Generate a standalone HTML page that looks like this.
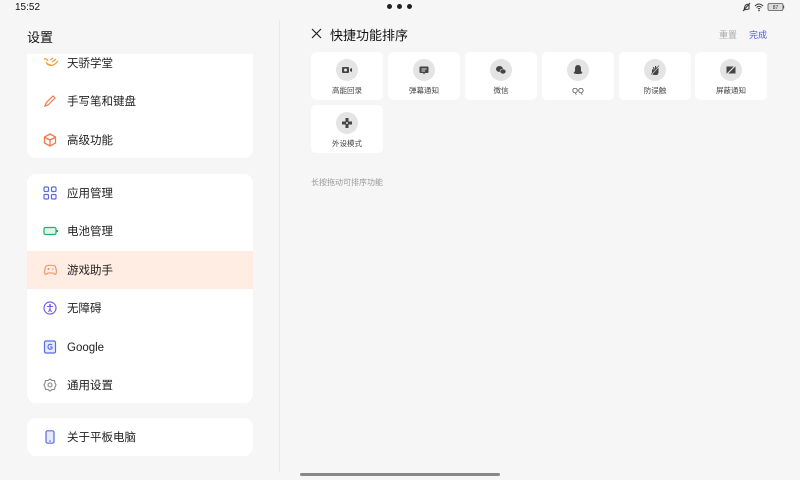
<!DOCTYPE html>
<html><head><meta charset="utf-8"><style>
*{margin:0;padding:0;box-sizing:border-box}
body{width:800px;height:480px;background:#f6f6f6;font-family:"Liberation Sans","Noto Sans CJK SC",sans-serif;position:relative;overflow:hidden;color:#222}
.abs{position:absolute}
.card{position:absolute;left:27px;width:226px;background:#fff;border-radius:9px;overflow:hidden}
.row{position:absolute;left:0;width:226px;height:38px;font-size:11.5px;color:#222}
.row span{position:absolute;left:40px;top:13px;line-height:14px}
.row svg{position:absolute;left:16px;top:12px}
.tile{position:absolute;width:72px;height:48px;background:#fff;border-radius:5px}
.tile .c{position:absolute;left:25px;top:7px;width:22px;height:22px;border-radius:50%;background:#e4e4e4}
.tile .c svg{position:absolute;left:5px;top:5px}
.tile .l{position:absolute;left:0;right:0;top:34px;text-align:center;font-size:7.5px;color:#444;line-height:9px}
</style></head><body>
<div class="abs" style="left:15px;top:2px;font-size:10px;color:#111">15:52</div>
<div class="abs" style="left:387px;top:4px;width:5px;height:5px;border-radius:50%;background:#222"></div>
<div class="abs" style="left:397px;top:4px;width:5px;height:5px;border-radius:50%;background:#222"></div>
<div class="abs" style="left:407px;top:4px;width:5px;height:5px;border-radius:50%;background:#222"></div>
<svg class="abs" style="left:742px;top:2px" width="50" height="10" viewBox="0 0 50 10">
<path d="M2 8 L3 4 Q5 1 7 3 L7 7 Z M1 9 L8 1" stroke="#333" fill="none" stroke-width="1"/>
<path d="M13 4 Q17 0 21 4 M14.5 5.5 Q17 3 19.5 5.5 M16 7 Q17 6 18 7" stroke="#333" fill="none" stroke-width="1"/><circle cx="17" cy="8.5" r="0.8" fill="#333"/>
<rect x="26" y="1.5" width="15" height="7" rx="1.5" fill="#ddd" stroke="#555" stroke-width="0.8"/><rect x="41" y="3.5" width="1.2" height="3" fill="#555"/>
<text x="33.5" y="7" font-size="5" text-anchor="middle" fill="#333" font-family="Liberation Sans">87</text></svg>

<div class="abs" style="left:27px;top:27px;font-size:13px;color:#111">设置</div>

<div class="card" style="top:54px;height:104px;border-radius:0 0 9px 9px">
 <div class="row" style="top:-10px"><svg width="16" height="14" viewBox="0 0 16 14"><path d="M1 3 Q4 2 5 5 M4 8 Q8 11 12 8 L15 5 M7 4 L10 2 M9 6 L13 3 M3 6 Q5 9 8 9" stroke="#f39a3a" fill="none" stroke-width="1.2"/></svg><span>天骄学堂</span></div>
 <div class="row" style="top:28px"><svg width="14" height="14" viewBox="0 0 14 14"><path d="M2 12 L3 9 L10 2 L12 4 L5 11 Z" stroke="#f0784a" fill="none" stroke-width="1.2"/></svg><span>手写笔和键盘</span></div>
 <div class="row" style="top:67px"><svg width="14" height="14" viewBox="0 0 14 14"><path d="M7 1 L12.5 4 L12.5 10 L7 13 L1.5 10 L1.5 4 Z M7 7 L12 4.5 M7 7 L2 4.5 M7 7 L7 12.5" stroke="#f0784a" fill="none" stroke-width="1.3"/></svg><span>高级功能</span></div>
</div>

<div class="card" style="top:174px;height:229px">
 <div class="row" style="top:0"><svg width="14" height="14" viewBox="0 0 14 14"><g stroke="#5a6be0" fill="none" stroke-width="1.2"><rect x="1" y="1" width="4.5" height="4.5" rx="1"/><rect x="8.5" y="1" width="4.5" height="4.5" rx="1"/><rect x="1" y="8.5" width="4.5" height="4.5" rx="1"/><rect x="8.5" y="8.5" width="4.5" height="4.5" rx="1"/></g></svg><span>应用管理</span></div>
 <div class="row" style="top:38px"><svg width="16" height="14" viewBox="0 0 16 14"><rect x="1" y="3.5" width="12" height="7" rx="1.5" fill="#dff5ea" stroke="#1fb06c" stroke-width="1.2"/><rect x="13.5" y="6" width="1.5" height="2" fill="#1fb06c"/></svg><span>电池管理</span></div>
 <div class="row" style="top:77px;background:#ffede4"><svg width="15" height="14" viewBox="0 0 15 14"><path d="M3 3 Q7.5 1.5 12 3 Q14 7 13 11 Q12 12 10 10 L5 10 Q3 12 2 11 Q1 7 3 3 Z M4.5 6 L6.5 6 M5.5 5 L5.5 7" stroke="#f28d5c" fill="none" stroke-width="1.1"/><circle cx="10" cy="6" r="0.8" fill="#f28d5c"/></svg><span>游戏助手</span></div>
 <div class="row" style="top:115px"><svg width="14" height="14" viewBox="0 0 14 14"><circle cx="7" cy="7" r="6" stroke="#7b5ce8" fill="none" stroke-width="1.2"/><circle cx="7" cy="4" r="1" fill="#7b5ce8"/><path d="M4 5.5 L10 5.5 M7 5.5 L7 8 L5.5 11 M7 8 L8.5 11" stroke="#7b5ce8" fill="none" stroke-width="1.1"/></svg><span>无障碍</span></div>
 <div class="row" style="top:154px"><svg width="14" height="14" viewBox="0 0 14 14"><rect x="1.5" y="1" width="11" height="12" rx="1.5" fill="#e6eaff" stroke="#5a6be0" stroke-width="1.2"/><path d="M9 5 Q7 3.5 5.5 5 Q4.5 7 5.5 8.5 Q7 10 9 8.5 L9 7 L7 7" stroke="#5a6be0" fill="none" stroke-width="1.1"/></svg><span>Google</span></div>
 <div class="row" style="top:192px"><svg width="14" height="14" viewBox="0 0 14 14"><path d="M7 1 L9 2.5 L11.5 2.5 L12 5 L13 7 L12 9 L11.5 11.5 L9 11.5 L7 13 L5 11.5 L2.5 11.5 L2 9 L1 7 L2 5 L2.5 2.5 L5 2.5 Z" stroke="#888" fill="none" stroke-width="1.1"/><circle cx="7" cy="7" r="2" stroke="#888" fill="none" stroke-width="1.1"/></svg><span>通用设置</span></div>
</div>

<div class="card" style="top:418px;height:38px">
 <div class="row" style="top:0"><svg width="14" height="14" viewBox="0 0 14 14"><rect x="3" y="0.8" width="8" height="12.4" rx="1.5" fill="#e6eaff" stroke="#5a6be0" stroke-width="1.2"/><path d="M6 11 L8 11" stroke="#5a6be0"/></svg><span>关于平板电脑</span></div>
</div>

<div class="abs" style="left:279px;top:20px;width:1px;height:452px;background:#e8e8e8"></div>

<svg class="abs" style="left:311px;top:28px" width="11" height="11" viewBox="0 0 11 11"><path d="M1 1 L10 10 M10 1 L1 10" stroke="#222" stroke-width="1.2"/></svg>
<div class="abs" style="left:330px;top:25px;font-size:13px;color:#111">快捷功能排序</div>
<div class="abs" style="left:719px;top:28px;font-size:9px;color:#aaa">重置</div>
<div class="abs" style="left:749px;top:28px;font-size:9px;color:#4a5fd0">完成</div>

<div class="tile" style="left:311px;top:52px"><div class="c"><svg width="12" height="12" viewBox="0 0 12 12"><rect x="1" y="3" width="7" height="6" rx="1" fill="#444"/><path d="M9 5 L11 4 L11 8 L9 7Z" fill="#444"/><circle cx="4.5" cy="6" r="1.5" fill="#e4e4e4"/></svg></div><div class="l">高能回录</div></div>
<div class="tile" style="left:388px;top:52px"><div class="c"><svg width="12" height="12" viewBox="0 0 12 12"><rect x="1.5" y="2.5" width="9" height="6.5" rx="1" fill="#444"/><path d="M3.5 5 L8.5 5 M3.5 7 L7 7" stroke="#e4e4e4"/><path d="M5 9 L6 10.5 L7 9" fill="#444"/></svg></div><div class="l">弹幕通知</div></div>
<div class="tile" style="left:465px;top:52px"><div class="c"><svg width="12" height="12" viewBox="0 0 12 12"><ellipse cx="4.5" cy="5" rx="3.5" ry="3" fill="#444"/><ellipse cx="8" cy="7.5" rx="3" ry="2.5" fill="#444" stroke="#e4e4e4" stroke-width="0.6"/></svg></div><div class="l">微信</div></div>
<div class="tile" style="left:542px;top:52px"><div class="c"><svg width="12" height="12" viewBox="0 0 12 12"><path d="M6 1 Q9 1 9 5 L9 7 L10.5 9 Q9 10 6 10 Q3 10 1.5 9 L3 7 L3 5 Q3 1 6 1Z" fill="#444"/></svg></div><div class="l">QQ</div></div>
<div class="tile" style="left:619px;top:52px"><div class="c"><svg width="12" height="12" viewBox="0 0 12 12"><path d="M3 5 L3 9 Q3 11 5.5 11 L8 11 Q9.5 10 9.5 8 L9.5 4 L8 4 L8 6 L7 2 L6 2 L6 6 L5 3 L4 3 L4.5 6 Z" fill="#444"/><path d="M2 11 L10.5 1.5" stroke="#e4e4e4" stroke-width="1.2"/><path d="M2 10.5 L10 1.5" stroke="#444" stroke-width="0.6"/></svg></div><div class="l">防误触</div></div>
<div class="tile" style="left:695px;top:52px"><div class="c"><svg width="12" height="12" viewBox="0 0 12 12"><rect x="1.5" y="2.5" width="9" height="7" fill="#444"/><path d="M1.5 10.5 L10.5 1.5" stroke="#e4e4e4" stroke-width="1.2"/></svg></div><div class="l">屏蔽通知</div></div>
<div class="tile" style="left:311px;top:105px"><div class="c"><svg width="12" height="12" viewBox="0 0 12 12"><path d="M4.5 1 L7.5 1 L7.5 4.5 L11 4.5 L11 7.5 L7.5 7.5 L7.5 11 L4.5 11 L4.5 7.5 L1 7.5 L1 4.5 L4.5 4.5Z" fill="#444"/><circle cx="6" cy="6" r="1" fill="#e4e4e4"/></svg></div><div class="l">外设模式</div></div>

<div class="abs" style="left:311px;top:177px;font-size:8px;color:#999">长按拖动可排序功能</div>
<div class="abs" style="left:300px;top:473px;width:200px;height:3px;border-radius:2px;background:#888"></div>
</body></html>
